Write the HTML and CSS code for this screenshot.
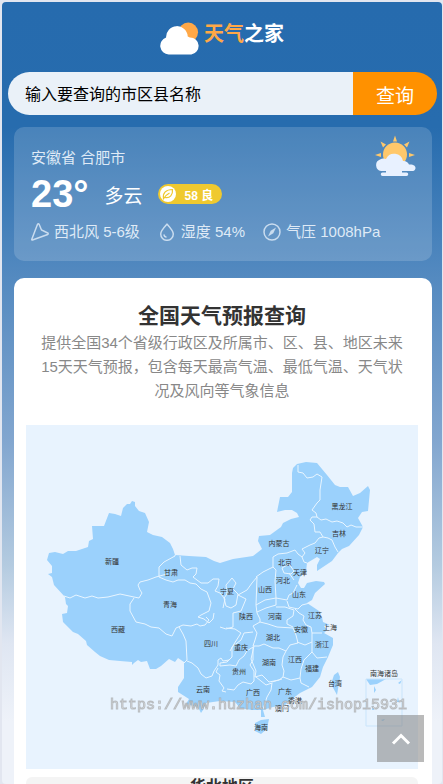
FILE: index.html
```html
<!DOCTYPE html>
<html lang="zh-CN">
<head>
    <meta charset="UTF-8">
    <meta name="viewport" content="width=device-width, initial-scale=1.0">
    <title>天气之家</title>
    <link rel="stylesheet" href="styles.css">
</head>
<body>
    <div class="page">
        <header class="header">
            <a class="logo" href="#">
                <svg class="logo-icon" viewBox="1 0 38 32" aria-hidden="true">
                    <circle cx="28" cy="10" r="9.5" fill="#ffa847"/>
                    <path d="M9 31.500a8.500 8.500 0 0 1-2.500-16.500 10.500 10.500 0 0 1 21-1 5 5 0 0 1 2 1 8.300 8.300 0 0 1 1.500 16.500z" fill="#fff"/>
                </svg>
                <span class="logo-text"><span class="logo-accent">天气</span>之家</span>
            </a>
        </header>

        <form class="search">
            <input class="search-input" type="text" aria-label="城市名称" placeholder="输入要查询的市区县名称">
            <button class="search-btn" type="submit">查询</button>
        </form>

        <section class="now">
            <p class="now-city">安徽省 合肥市</p>
            <div class="now-main">
                <span class="now-temp">23°</span>
                <span class="now-text">多云</span>
                <span class="air">
                    <svg class="air-icon" viewBox="0 0 16 16" aria-hidden="true">
                        <circle cx="8" cy="8" r="8" fill="#fff"/>
                        <path d="M3.500 12.500C2.500 7 6 3.500 12.500 3.500c.5 5.500-2.500 9-7.500 8M3 13.500c1.500-3 3.500-5 6.500-6.500" fill="none" stroke="#efc92f" stroke-width="1.200"/>
                    </svg>
                    58 良
                </span>
            </div>
            <ul class="now-info">
                <li>
                    <svg class="info-icon" viewBox="0 0 18 18" aria-hidden="true">
                        <path d="M6.500 1.300c.4-.6 1.300-.6 1.600 0L10.500 7l6.200 3c.7.4.7 1.200 0 1.500L1.500 17c-.5.200-.9-.2-.7-.7z"/>
                    </svg>
                    西北风 5-6级
                </li>
                <li>
                    <svg class="info-icon" viewBox="0 0 18 18" aria-hidden="true">
                        <path d="M9 1.200C6 4.500 2.700 7.800 2.700 11a6.300 6.300 0 0 0 12.600 0C15.300 7.800 12 4.500 9 1.200zM5.800 11.500a3.400 3.400 0 0 0 2.700 2.700"/>
                    </svg>
                    湿度 54%
                </li>
                <li>
                    <svg class="info-icon" viewBox="0 0 18 18" aria-hidden="true">
                        <circle cx="9" cy="9" r="8"/>
                        <path class="solid" d="M13 4.500 10.300 10.300 5 13.500 7.700 7.700z"/>
                    </svg>
                    气压 1008hPa
                </li>
            </ul>
            <svg class="now-icon" viewBox="0 0 42 42" aria-hidden="true">
                <path d="M21 .5l2 6h-4zM6.500 6.500l5.500 3-3 3zM35.500 6.500l-2.500 6-3-3zM1 20l6-2v4zM41 20l-6-2v4z" fill="#ffc86b"/>
                <circle cx="21" cy="19.500" r="12" fill="#ffc86b"/>
                <path d="M7 36a6 6 0 0 1-1-11.500 7 7 0 0 1 6-.5 9 9 0 0 1 17 2 6 6 0 0 1 6 3.500c9-.5 7 6.500 4 6.500H28v1.500h4.500a1.700 1.700 0 0 1 0 3.500h-24a1.700 1.700 0 0 1 0-3.500H12V36z" fill="#e8f1ff"/>
            </svg>
        </section>

        <main class="panel">
            <h1 class="panel-title">全国天气预报查询</h1>
            <p class="panel-desc">提供全国34个省级行政区及所属市、区、县、地区未来15天天气预报，包含每天最高气温、最低气温、天气状况及风向等气象信息</p>

            <div class="map">
                <svg class="map-svg" viewBox="26 425 392 344">
                    <g class="land">
                        <path d="M132 501L135 502 135 506 139 511 145 513 149 522 147 532 153 535 162 537 170 543 173 549 175 555 189 556 206 557 214 561 220 563 233 559 253 556 262 549 258 541 259 536 270 535 281 527 283 523 291 519 299 517 297 513 292 510 285 510 277 512 280 497 288 497 292 492 292 473 293 468 297 464 306 462 317 463 327 475 335 485 340 487 348 487 353 496 360 493 368 486 370 490 368 511 362 512 358 518 363 527 359 535 349 546 342 549 338 553 332 561 317 571 317 565 320 559 317 557 312 560 307 563 306 572 300 577 298 583 301 588 304 588 307 583 316 581 324 582 325 584 315 593 312 600 307 603 313 607 319 611 322 617 323 622 330 625 324 626 327 630 324 633 333 638 333 645 328 657 323 667 320 677 312 687 300 693 292 699 285 705 273 707 263 710 265 717 261 717 261 710 252 710 240 708 235 702 220 701 206 703 203 710 201 713 198 707 186 704 189 699 178 692 178 687 184 678 184 662 178 658 175 662 169 659 161 666 156 669 150 669 147 661 141 662 138 660 134 663 132 665 132 662 120 661 109 660 100 656 95 652 87 645 86 641 78 634 73 632 63 622 62 614 67 613 68 606 66 604 65 597 54 585 52 577 48 574 52 573 52 566 47 560 49 553 55 552 59 553 63 554 68 551 76 551 88 547 89 541 93 539 92 526 104 526 109 513 115 514 121 516 123 508 127 504 130 504z"/>
                        <path d="M255 723l6-3 8-1-2 10-6 5-6-3z"/>
                        <path d="M338 672l2 5-3 18-6-11 3-9z"/>
                        <path d="M366 679h20l-9 5-7 1z"/>
                        <path d="M374 686l2 4-2 3zM398 683l4-3-2 4zM373 705l1 5h-2zM398 697l1 5h-2zM381 720l4-1-2 2z"/>
                    </g>
                    <g class="border">
                        <path d="M64 596l6 2 6-3 9 3 7-2 6 2 10-1 12-3 14 3 5 1 3-5-2-3-2-5 2-3 8-2 8-3 11-3"/>
                        <path d="M159 577v-10l5-5 11-6v-1M159 577l7 3 7 2 5-2 7 0 5 3 6 1 5 5 6 3 4 11-2 8-8 4-3 2 6 2 5 4 4-4 1-6"/>
                        <path d="M134 598l-4 6v7l6 11 9 2 6 3 8 1 7 6 6 2 4-8 7-3 8 1 6-2 3 2 5-1 4-5-3-3"/>
                        <path d="M179 627l4 7 3 7 1 19-3 3M187 661l5 2 6 5 3 6 5 4 6-2 2-5 4-6v-5l3-2 2 3 6-1M218 668l-2 4 4 3-1 6 5 7-2 3 4 1"/>
                        <path d="M180 556l1 9 6 5 5-2h5l-1 6-3 3 8 6 7 0 5-4 6 0-1 7-3 5 5 2 5 6-2 9"/>
                        <path d="M232 578l4 5-3 6 5 5-2 11-5 3-5-2-2-8 3-4-1-9zM257 577l-5 6-5 7-9 5 8 4-5 12-8 2v14l-7 2-6-2M226 628l9 1 6 4-7 11-4 7"/>
                        <path d="M256 577L263 572 273 567 273 557 278 554 287 553 295 550 298 554 302 557 305 553 302 549 310 545 315 543 319 538 323 537 320 532 315 532 314 524 310 520 312 517 317 517 316 513 312 510 317 503 320 500 320 490 322 477 317 474 313 477 307 478 303 473 298 472 298 465"/>
                        <path d="M317 517L321 520 326 519 332 522 337 521 343 523 347 527 351 525 356 527 363 527M323 537L328 538 332 540 335 547 338 552M302 557L304 562 307 563"/>
                        <path d="M273 567l3 3-1 11 1 17-11 2-9 5 1-28M276 598l11 2 2-5 4-2 4-8M282 568l7-4 5 7-3 3-7-1zM289 573l5 7"/>
                        <path d="M256 605l1 8 3 6 0 3-7 4 4 7-2 7-2 6 6 0 5-2 9 4 6 0 7 3 4-6 8-2-2-8-3-7-16-1-9-3-8-2M257 612l9-4 10-3v-7M276 607h9l9 3-1 6-6 4 0 4 6 3"/>
                        <path d="M287 601l2 6 9 2 4-4 8-2M295 609l4 4 5 3-1 4 3 5 5 2 1 6h10M312 633v9l-7 3-8-3M312 642v10l5 6 10-1"/>
                        <path d="M253 632l-9 1-3 7-9 7v10l-5 5-7 1v3l10-1 6 1 3-6 5-4 3-5 6-4v13l-3 5 4 6v10l-3 3-8-2-5 3-4 5-7-1"/>
                        <path d="M254 646l-3 13 5 12-1 6 7-2 7 7 10-2 4-3 1-6-2-6 1-8 3-6M283 677l8 3 9-2 1-9 3-9 8-8M300 678l1 5 8 4"/>
                        <path d="M256 677l10 8 6-2-1 7-4 7-4 12M272 682l10-3"/>
                        <path class="sea" d="M366 679h36v47h-36z"/>
                    </g>
                    <g class="label">
                        <text x="112" y="564">新疆</text>
                        <text x="171" y="575">甘肃</text>
                        <text x="170" y="607">青海</text>
                        <text x="118" y="632">西藏</text>
                        <text x="211" y="646">四川</text>
                        <text x="203" y="692">云南</text>
                        <text x="227" y="594">宁夏</text>
                        <text x="279" y="546">内蒙古</text>
                        <text x="342" y="509">黑龙江</text>
                        <text x="339" y="536">吉林</text>
                        <text x="322" y="553">辽宁</text>
                        <text x="285" y="565">北京</text>
                        <text x="300" y="575">天津</text>
                        <text x="283" y="583">河北</text>
                        <text x="265" y="592">山西</text>
                        <text x="299" y="597">山东</text>
                        <text x="246" y="619">陕西</text>
                        <text x="275" y="619">河南</text>
                        <text x="315" y="618">江苏</text>
                        <text x="330" y="630">上海</text>
                        <text x="301" y="632">安徽</text>
                        <text x="273" y="640">湖北</text>
                        <text x="322" y="647">浙江</text>
                        <text x="241" y="650">重庆</text>
                        <text x="269" y="665">湖南</text>
                        <text x="295" y="662">江西</text>
                        <text x="312" y="671">福建</text>
                        <text x="239" y="674">贵州</text>
                        <text x="253" y="695">广西</text>
                        <text x="285" y="694">广东</text>
                        <text x="295" y="703">香港</text>
                        <text x="282" y="711">澳门</text>
                        <text x="261" y="730">海南</text>
                        <text x="335" y="686">台湾</text>
                        <text x="384" y="676">南海诸岛</text>
                    </g>
                </svg>
            </div>

            <section class="area">
                <h2 class="area-title">华北地区</h2>
            </section>
        </main>
    </div>

    <div class="watermark">https://www.huzhan.com/ishop15931</div>

    <button class="to-top" type="button" aria-label="返回顶部">
        <svg viewBox="0 0 20 12" aria-hidden="true"><path d="M2 10.500l8-8 8 8"/></svg>
    </button>
</body>
</html>
```
FILE: styles.css
```css
* {
    box-sizing: border-box;
}

body {
    margin: 0;
    height: 100vh;
    padding: 2px 1px 0 2px;
    overflow: hidden;
    background-color: #e2e6f0;
    font-family: "Liberation Sans", "Noto Sans CJK SC", sans-serif;
    font-size: 15px;
}

h1, h2, p, ul {
    margin: 0;
    padding: 0;
}

.page {
    height: 100%;
    overflow: hidden;
    padding: 0 5px;
    border-radius: 4px;
    background: linear-gradient(#266bae 0%, #276cae 16%, #5188bf 34%, #82a6cf 56%, #b4cbe0 72%, #dfe6f2 82%, #eef2f9 92%);
}

/* logo */
.header {
    display: flex;
    justify-content: center;
    height: 70px;
    padding-top: 20px;
}

.logo {
    display: flex;
    align-items: flex-start;
    gap: 4px;
    text-decoration: none;
}

.logo-icon {
    width: 40px;
    height: 33px;
}

.logo-text {
    color: #fff;
    font-size: 20px;
    line-height: 24px;
    font-weight: bold;
}

.logo-accent {
    color: #ffa847;
}

/* buscador */
.search {
    display: flex;
    height: 43px;
    border-radius: 22px;
    overflow: hidden;
    margin-left: 1px;
}

.search-input {
    flex: 1;
    min-width: 0;
    border: none;
    padding: 3px 17px 0;
    background-color: #eaf1f8;
    font: inherit;
    font-size: 16px;
}

.search-input::placeholder {
    color: #000;
    opacity: 1;
}

.search-btn {
    width: 84px;
    border: none;
    padding: 2px 0 0;
    background-color: #ff9100;
    color: #fff;
    font: inherit;
    font-size: 19px;
    cursor: pointer;
}

/* tiempo actual */
.now {
    position: relative;
    margin: 12px 5px 0 7px;
    padding: 21px 17px 17px;
    border-radius: 10px;
    background-color: rgba(255, 255, 255, 0.16);
    color: #dfeaf6;
}

.now-city {
    line-height: 20px;
}

.now-main {
    display: flex;
    align-items: center;
    gap: 16px;
    height: 52px;
    color: #fff;
}

.now-temp {
    font-size: 38px;
    font-weight: bold;
}

.now-text {
    font-size: 19px;
}

.air {
    display: flex;
    align-items: center;
    gap: 8px;
    height: 20px;
    padding: 0 9px 0 2px;
    border-radius: 10px;
    background-color: #efc92f;
    font-size: 12px;
    font-weight: bold;
}

.air-icon {
    width: 16px;
    height: 16px;
}

.now-info {
    display: flex;
    gap: 18px;
    list-style: none;
    line-height: 24px;
    white-space: nowrap;
}

.now-info li {
    display: flex;
    align-items: center;
    gap: 5px;
}

.info-icon {
    width: 18px;
    height: 18px;
    fill: none;
    stroke: #c9dcef;
    stroke-width: 1.5;
}

.info-icon .solid {
    fill: #c9dcef;
    stroke: none;
}

.now-icon {
    position: absolute;
    top: 8px;
    right: 16px;
    width: 42px;
    height: 42px;
}

/* mapa */
.panel {
    margin: 17px 5px 0 7px;
    padding: 23px 14px 20px 12px;
    border-radius: 10px;
    background-color: #fff;
    text-align: center;
}

.panel-title {
    color: #333;
    font-size: 21px;
    line-height: 30px;
}

.panel-desc {
    padding: 0 10px;
    color: #888;
    line-height: 24px;
}

.map {
    margin-top: 22px;
    background-color: #e8f3fe;
}

.map-svg {
    display: block;
    width: 100%;
}

.land {
    fill: #9bd1fc;
}

.border {
    fill: none;
    stroke: #e8f5ff;
    stroke-width: 1;
    stroke-linejoin: round;
}

.border .sea {
    stroke: #c9e4fb;
}

.label {
    fill: #333;
    font-size: 7px;
    text-anchor: middle;
}

.area {
    margin-top: 8px;
    border-radius: 6px;
    background-color: #f4f4f4;
}

.area-title {
    color: #333;
    font-size: 16px;
    line-height: 20px;
}

.watermark {
    position: fixed;
    top: 697px;
    left: 110px;
    color: #e6ebf0;
    font-family: "Liberation Mono", monospace;
    font-size: 15px;
    line-height: 18px;
    -webkit-text-stroke: 1px rgba(140, 140, 140, 0.5);
}

.to-top {
    position: fixed;
    right: 19px;
    bottom: 22px;
    display: flex;
    align-items: center;
    justify-content: center;
    width: 47px;
    height: 47px;
    border: none;
    background-color: rgba(130, 130, 130, 0.55);
}

.to-top svg {
    width: 20px;
    height: 12px;
    fill: none;
    stroke: #fff;
    stroke-width: 3;
}
```
